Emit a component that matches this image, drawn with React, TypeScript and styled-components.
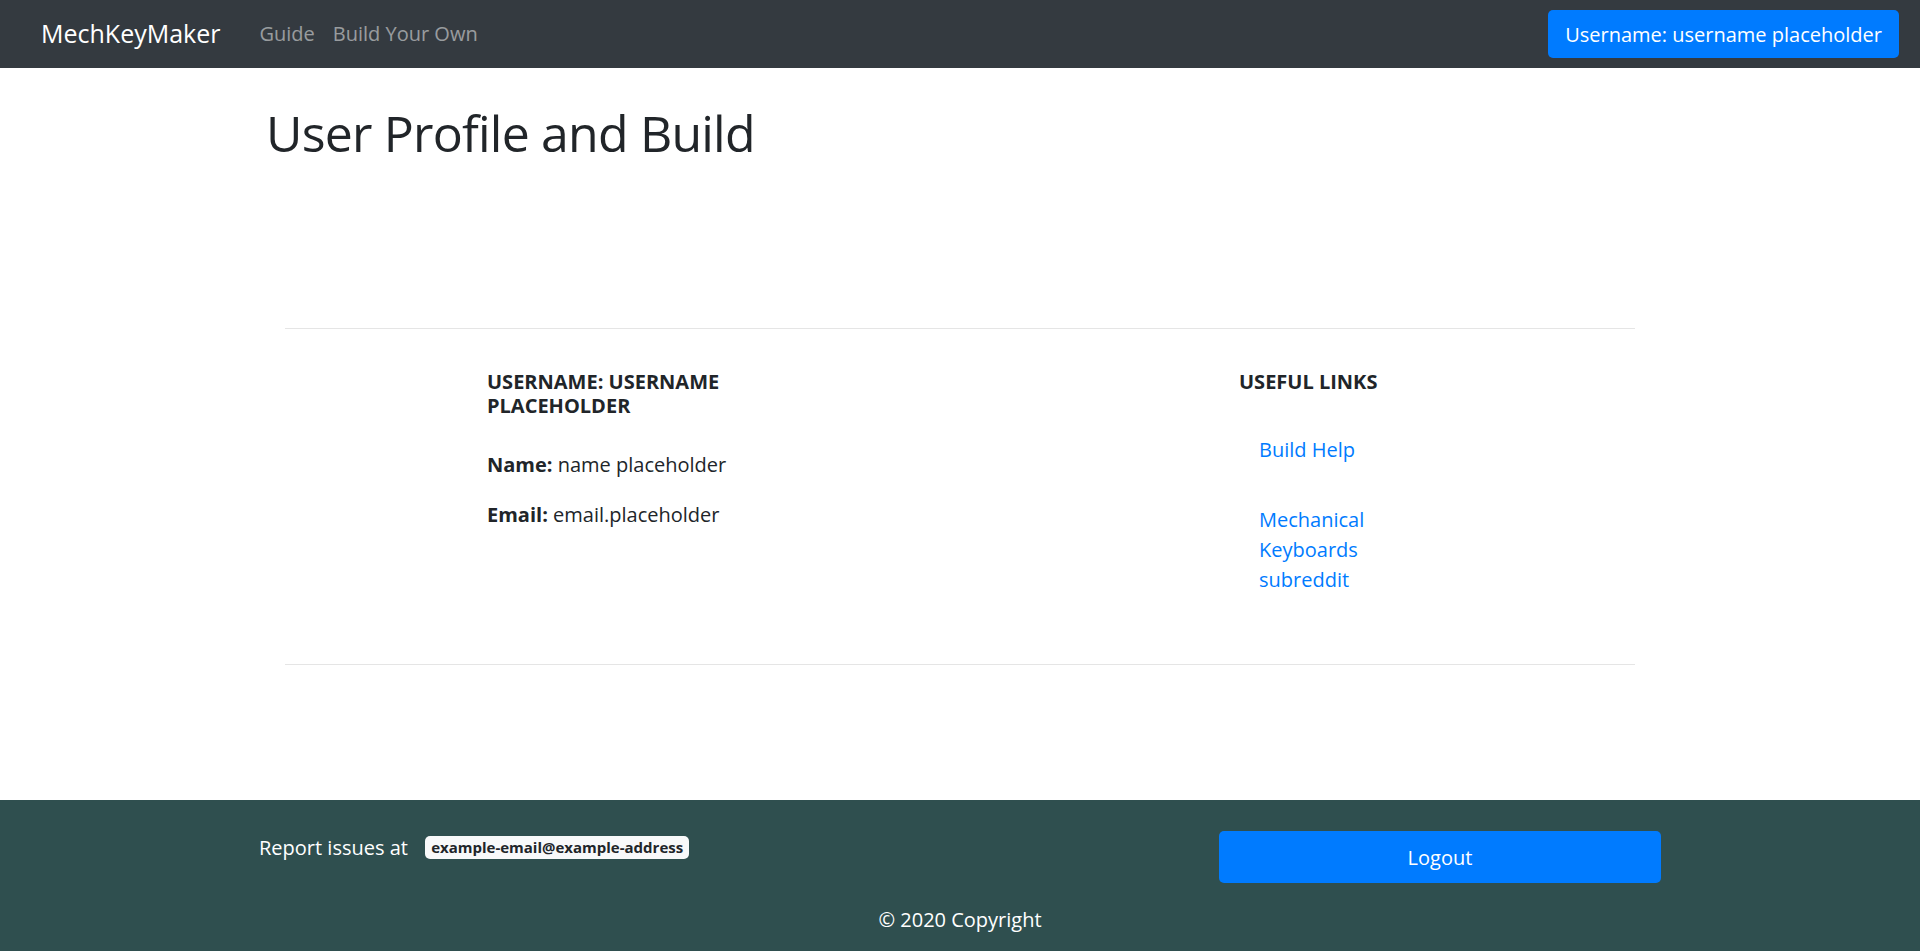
import React, { FC } from 'react'
import styled, { createGlobalStyle } from 'styled-components'

const GlobalStyle = createGlobalStyle`
  html, body {
    margin: 0;
    padding: 0;
  }
  body {
    font-family: 'Open Sans', 'Noto Sans', Arial, sans-serif;
    font-size: 20px;
    line-height: 1.5;
    color: #212529;
    background: #fff;
  }
  * {
    box-sizing: border-box;
  }
`

const navLinks = ['Guide', 'Build Your Own']
const usefulLinks = ['Build Help', 'Mechanical Keyboards subreddit']

const Header: FC = () => (
  <Navbar>
    <Brand href="#">MechKeyMaker</Brand>
    <NavList>
      {navLinks.map(link => (
        <NavLink key={link} href="#">
          {link}
        </NavLink>
      ))}
    </NavList>
    <UserButton>Username: username placeholder</UserButton>
  </Navbar>
)

const Profile: FC = () => (
  <ProfileSection>
    <Column>
      <SectionTitle>Username: username placeholder</SectionTitle>
      <Detail>
        <strong>Name:</strong> name placeholder
      </Detail>
      <Detail>
        <strong>Email:</strong> email.placeholder
      </Detail>
    </Column>
    <Column>
      <SectionTitle>Useful links</SectionTitle>
      <LinkList>
        {usefulLinks.map(link => (
          <li key={link}>
            <Link href="#">{link}</Link>
          </li>
        ))}
      </LinkList>
    </Column>
  </ProfileSection>
)

const Footer: FC = () => (
  <_Footer>
    <FooterRow>
      <ReportText>
        Report issues at <Badge>example-email@example-address</Badge>
      </ReportText>
      <LogoutButton>Logout</LogoutButton>
    </FooterRow>
    <Copyright>© 2020 Copyright</Copyright>
  </_Footer>
)

export default function App() {
  return (
    <>
      <GlobalStyle />
      <Page>
        <Header />
        <Main>
          <Title>User Profile and Build</Title>
          <Divider />
          <Profile />
          <Divider />
        </Main>
        <Footer />
      </Page>
    </>
  )
}

const Page = styled.div`
  display: flex;
  flex-direction: column;
  min-height: 100vh;
`

const Navbar = styled.nav`
  display: flex;
  align-items: center;
  height: 68px;
  padding: 0 21px 0 41px;
  background: #343a40;
`

const Brand = styled.a`
  font-size: 25px;
  line-height: 1.5;
  color: #fff;
  text-decoration: none;
  margin-right: 30px;
`

const NavList = styled.div`
  display: flex;
  flex: 1;
`

const NavLink = styled.a`
  color: rgba(255, 255, 255, 0.5);
  text-decoration: none;
  padding: 0 9px;
`

const UserButton = styled.button`
  height: 48px;
  padding: 0 17px;
  border: none;
  border-radius: 5px;
  background: #007bff;
  color: #fff;
  font-family: inherit;
  font-size: 20px;
`

const Main = styled.main`
  padding-top: 34px;
`

const Title = styled.h1`
  margin: 0 0 163px 266px;
  font-size: 50px;
  font-weight: 500;
  line-height: 1.25;
  letter-spacing: -0.8px;
`

const Divider = styled.hr`
  width: 1350px;
  margin: 0 auto;
  border: none;
  border-top: 1px solid rgba(0, 0, 0, 0.1);
`

const ProfileSection = styled.section`
  display: grid;
  grid-template-columns: 300px 200px;
  column-gap: 452px;
  padding: 41px 0 69px 487px;
`

const Column = styled.div`
  display: flex;
  flex-direction: column;
`

const SectionTitle = styled.h6`
  margin: 0 0 32px;
  font-size: 20px;
  font-weight: 700;
  line-height: 1.2;
  text-transform: uppercase;
`

const Detail = styled.p`
  margin: 0 0 20px;
`

const LinkList = styled.ul`
  list-style: none;
  margin: 9px 0 0;
  padding: 0 0 0 20px;
  width: 140px;
  display: flex;
  flex-direction: column;
  gap: 40px;
`

const Link = styled.a`
  color: #007bff;
  text-decoration: none;
`

const _Footer = styled.footer`
  margin-top: auto;
  background: #2f4f4f;
  color: #fff;
  padding: 31px 0 16px;
`

const FooterRow = styled.div`
  display: flex;
  justify-content: space-between;
  align-items: flex-start;
  width: 1402px;
  margin: 0 auto 22px;
`

const ReportText = styled.p`
  margin: 2px 0 0;
`

const Badge = styled.span`
  display: inline-block;
  margin-left: 12px;
  padding: 3.75px 6px;
  border-radius: 5px;
  background: #f8f9fa;
  color: #212529;
  font-size: 15px;
  font-weight: 700;
  line-height: 1;
  vertical-align: 2px;
`

const LogoutButton = styled.button`
  width: 442px;
  height: 52px;
  border: none;
  border-radius: 5px;
  background: #007bff;
  color: #fff;
  font-family: inherit;
  font-size: 20px;
`

const Copyright = styled.div`
  text-align: center;
`
